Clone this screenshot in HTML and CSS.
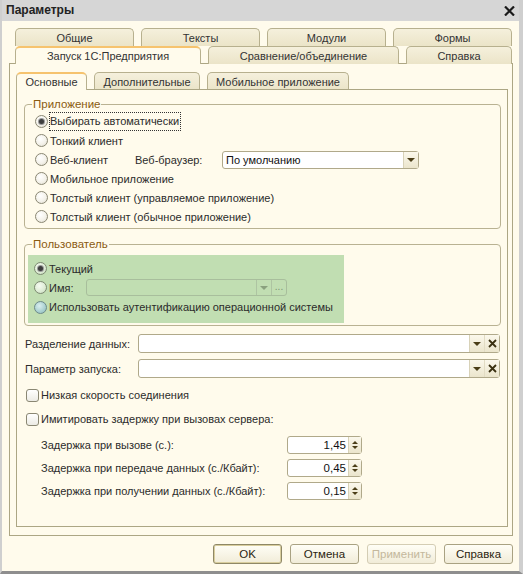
FILE: index.html
```html
<!DOCTYPE html>
<html lang="ru">
<head>
<meta charset="utf-8">
<title>Параметры</title>
<link rel="stylesheet" href="styles.css">
</head>
<body>
<div class="window">
  <div class="titlebar">
    <span class="title">Параметры</span>
    <svg class="close" width="11" height="10" viewBox="0 0 11 10"><path d="M1 0.5 L10 9.5 M10 0.5 L1 9.5" stroke="#1a1a1a" stroke-width="2.2"/></svg>
  </div>
  <div class="client">
    <div class="outer-tabs">
      <div class="tabrow row1">
        <div class="tab">Общие</div>
        <div class="tab">Тексты</div>
        <div class="tab">Модули</div>
        <div class="tab">Формы</div>
      </div>
      <div class="tabrow row2">
        <div class="tab active w-start">Запуск 1С:Предприятия</div>
        <div class="tab w-compare">Сравнение/объединение</div>
        <div class="tab w-help">Справка</div>
      </div>
    </div>
    <div class="outer-panel">
      <div class="tabrow inner-tabs">
        <div class="tab active w-main">Основные</div>
        <div class="tab w-extra">Дополнительные</div>
        <div class="tab w-mobile">Мобильное приложение</div>
      </div>
      <div class="inner-panel">
        <fieldset class="group group-app">
          <legend>Приложение</legend>
          <div class="opt"><span class="radio checked"></span><span class="focus">Выбирать автоматически</span></div>
          <div class="opt"><span class="radio"></span><span>Тонкий клиент</span></div>
          <div class="opt">
            <span class="radio"></span><span class="web">Веб-клиент</span>
            <span class="browser-label">Веб-браузер:</span>
            <span class="combo browser-combo"><span class="combo-text">По умолчанию</span><span class="btn-drop"><i class="tri-down"></i></span></span>
          </div>
          <div class="opt"><span class="radio"></span><span>Мобильное приложение</span></div>
          <div class="opt"><span class="radio"></span><span>Толстый клиент (управляемое приложение)</span></div>
          <div class="opt"><span class="radio"></span><span>Толстый клиент (обычное приложение)</span></div>
        </fieldset>

        <fieldset class="group group-user">
          <legend>Пользователь</legend>
          <div class="green">
            <div class="opt"><span class="radio checked green-radio"></span><span>Текущий</span></div>
            <div class="opt">
              <span class="radio green-radio"></span><span class="name-label">Имя:</span>
              <span class="combo disabled name-combo"><span class="combo-text"></span><span class="btn-drop"><i class="tri-down"></i></span><span class="btn-dots">...</span></span>
            </div>
            <div class="opt"><span class="radio hover-radio"></span><span>Использовать аутентификацию операционной системы</span></div>
          </div>
        </fieldset>

        <div class="fields">
          <div class="field-row r-sep">
            <span class="flabel">Разделение данных:</span>
            <span class="combo wide"><span class="combo-text"></span><span class="btn-drop"><i class="tri-down"></i></span><span class="btn-clear"><svg width="9" height="9" viewBox="0 0 9 9"><path d="M1 1 L8 8 M8 1 L1 8" stroke="#3a3010" stroke-width="1.8"/></svg></span></span>
          </div>
          <div class="field-row r-param">
            <span class="flabel">Параметр запуска:</span>
            <span class="combo wide"><span class="combo-text"></span><span class="btn-drop"><i class="tri-down"></i></span><span class="btn-clear"><svg width="9" height="9" viewBox="0 0 9 9"><path d="M1 1 L8 8 M8 1 L1 8" stroke="#3a3010" stroke-width="1.8"/></svg></span></span>
          </div>
          <div class="check-row c1"><span class="checkbox"></span><span>Низкая скорость соединения</span></div>
          <div class="check-row c2"><span class="checkbox"></span><span>Имитировать задержку при вызовах сервера:</span></div>
          <div class="spin-row s1">
            <span class="slabel">Задержка при вызове (с.):</span>
            <span class="spin"><span class="spin-val">1,45</span><span class="spin-btn"><i class="tri-up"></i><i class="tri-down small"></i></span></span>
          </div>
          <div class="spin-row s2">
            <span class="slabel">Задержка при передаче данных (с./Кбайт):</span>
            <span class="spin"><span class="spin-val">0,45</span><span class="spin-btn"><i class="tri-up"></i><i class="tri-down small"></i></span></span>
          </div>
          <div class="spin-row s3">
            <span class="slabel">Задержка при получении данных (с./Кбайт):</span>
            <span class="spin"><span class="spin-val">0,15</span><span class="spin-btn"><i class="tri-up"></i><i class="tri-down small"></i></span></span>
          </div>
        </div>
      </div>
    </div>
    <div class="buttons">
      <button class="btn default"><span>OK</span></button>
      <button class="btn">Отмена</button>
      <button class="btn disabled">Применить</button>
      <button class="btn">Справка</button>
    </div>
  </div>
</div>
</body>
</html>
```
FILE: styles.css
```css
* { box-sizing: border-box; }
html, body { margin: 0; padding: 0; }
body {
  font-family: "Liberation Sans", Arial, sans-serif;
  font-size: 11px;
  color: #2b2b2b;
  background: #d4d4d4;
}
.window {
  width: 523px;
  height: 574px;
  display: flex;
  flex-direction: column;
  background: #d6d6d6;
  border-bottom: 3px solid #8e8e8e;
  border-left: 2px solid #cfcfcf;
  border-right: 4px solid #cfcfcf;
}
.titlebar {
  height: 21px;
  flex: none;
  display: flex;
  align-items: center;
  justify-content: space-between;
  padding: 0 4px 1px 4px;
}
.title {
  font-weight: bold;
  font-size: 12px;
  color: #222;
}
.close { margin-top: 1px; }
.client {
  flex: 1;
  background: #fffbec;
  display: flex;
  flex-direction: column;
  padding: 7px 6px 0 7px;
}

/* tabs */
.outer-tabs {
  padding: 0 1px 0 6px;
  position: relative;
  z-index: 1;
}
.tabrow { display: flex; gap: 7px; }
.tab {
  height: 18px;
  border: 1px solid #b7b08e;
  border-bottom: none;
  border-radius: 5px 5px 0 0;
  background: linear-gradient(#f5f0dc, #ebe4c8);
  display: flex;
  align-items: center;
  justify-content: center;
  color: #333;
  white-space: nowrap;
}
.row1 .tab { flex: 1; }
.row2 { margin-top: 0; }
.row2 .tab { height: 18px; margin-bottom: -1px; }
.tab.active {
  background: #fffbec;
  border-top: 2px solid #f6c36e;
  position: relative;
  z-index: 2;
}
.w-start { width: 186px; }
.w-compare { width: 191px; }
.w-help { flex: 1; }
.outer-panel {
  flex: none;
  height: 473px;
  border: 1px solid #aca684;
  padding: 8px 4px 0 6px;
  display: flex;
  flex-direction: column;
}
.inner-tabs .tab { height: 18px; margin-bottom: -1px; }
.w-main { width: 71px; }
.w-extra { width: 106px; }
.w-mobile { width: 142px; }
.inner-panel {
  height: 438px;
  border: 1px solid #aca684;
  padding: 7px 6px 0 7px;
}

/* groups */
.group {
  margin: 0;
  border: 1px solid #b9b292;
  border-radius: 4px;
  padding: 1px 0 2px 10px;
}
.group legend {
  color: #8a5a10;
  padding: 0 1px;
  margin-left: -3px;
  line-height: 14px;
  font-size: 11.5px;
}
.group-user { margin-top: 8px; padding: 4px 0 2px 3px; }
.group-user legend { margin-left: 4px; }
.opt {
  height: 19px;
  display: flex;
  align-items: center;
  white-space: nowrap;
}
.radio {
  width: 13px;
  height: 13px;
  border-radius: 50%;
  border: 1px solid #8a8773;
  background: radial-gradient(circle at 40% 35%, #ffffff 0%, #f4f2ea 55%, #dcd8ca 100%);
  margin-right: 2px;
  flex: none;
  display: flex;
  align-items: center;
  justify-content: center;
}
.radio.checked::after {
  content: "";
  width: 5px;
  height: 5px;
  border-radius: 50%;
  background: #3e3e3e;
  box-shadow: 0 0 0 1px #9a9a9a;
}
.focus {
  outline: 1px dotted #333;
  outline-offset: 0;
  padding: 2px 1px 3px 0;
}
.web { width: 85px; }
.browser-label { width: 87px; }
.combo {
  height: 18px;
  border: 1px solid #b0a98a;
  border-radius: 3px;
  background: #fff;
  display: flex;
  align-items: stretch;
}
.combo-text { flex: 1; padding-left: 3px; display: flex; align-items: center; color: #111; }
.btn-drop, .btn-clear, .btn-dots {
  width: 15px;
  background: linear-gradient(#fbf8ec, #ebe5cc);
  border-left: 1px solid #d8d2b8;
  display: flex;
  align-items: center;
  justify-content: center;
}
.tri-down {
  width: 0; height: 0;
  border-left: 4px solid transparent;
  border-right: 4px solid transparent;
  border-top: 4px solid #4b3e18;
}
.tri-up {
  width: 0; height: 0;
  border-left: 3px solid transparent;
  border-right: 3px solid transparent;
  border-bottom: 3px solid #4b3e18;
}
.tri-down.small {
  border-left-width: 3px;
  border-right-width: 3px;
  border-top-width: 3px;
}
.browser-combo { width: 197px; }
.green {
  width: 316px;
  height: 68px;
  background: #c1deb2;
  padding: 4px 0 0 6px;
}
.green .opt:nth-child(3) { height: 20px; }
.green-radio { background: radial-gradient(circle at 40% 35%, #f6fbf2 0%, #dcebd3 60%, #bfd3b5 100%); border-color: #7d8a72; }
.hover-radio { background: radial-gradient(circle at 40% 35%, #d9eeef 0%, #a9d0d0 60%, #8fbcbc 100%); border-color: #6d8a8a; }
.name-label { width: 37px; }
.name-combo {
  width: 201px;
  background: #c1deb2;
  border-color: #a8be9c;
  height: 17px;
}
.name-combo .btn-drop, .name-combo .btn-dots {
  background: transparent;
  border-left: 1px solid #aec4a2;
}
.name-combo .tri-down { border-top-color: #8aa17e; }
.btn-dots { color: #7e9474; align-items: flex-end; padding-bottom: 3px; font-size: 10px; }

/* fields */
.fields {
  display: flex;
  flex-direction: column;
  margin-top: 8px;
}
.field-row { height: 19px; display: flex; align-items: center; padding-left: 1px; }
.r-param { margin-top: 6px; }
.flabel { width: 113px; flex: none; }
.combo.wide { width: 362px; height: 19px; }
.btn-clear { border-left: 1px solid #e2dcc4; }

.check-row { height: 18px; display: flex; align-items: center; padding-left: 2px; white-space: nowrap; }
.c1 { margin-top: 8px; }
.c2 { margin-top: 6px; }
.checkbox {
  width: 13px; height: 13px;
  border: 1px solid #8a8773;
  border-radius: 3px;
  background: linear-gradient(#ffffff, #ecebe4);
  margin-right: 2px;
  flex: none;
}
.spin-row { height: 18px; display: flex; align-items: center; padding-left: 17px; white-space: nowrap; }
.s1 { margin-top: 8px; }
.s2, .s3 { margin-top: 5px; }
.slabel { width: 246px; flex: none; }
.spin {
  width: 75px;
  height: 18px;
  border: 1px solid #b0a98a;
  border-radius: 3px;
  background: #fff;
  display: flex;
}
.spin-val { flex: 1; text-align: right; padding-right: 2px; display: flex; align-items: center; justify-content: flex-end; color: #111; font-size: 11.5px; }
.spin-btn {
  width: 13px;
  background: linear-gradient(#fbf8ec, #ebe5cc);
  border-left: 1px solid #d8d2b8;
  display: flex;
  flex-direction: column;
  align-items: center;
  justify-content: center;
  gap: 2px;
}

/* buttons */
.buttons {
  display: flex;
  justify-content: flex-end;
  gap: 8px;
  margin-top: 8px;
}
.btn {
  width: 69px;
  height: 20px;
  font-family: "Liberation Sans", Arial, sans-serif;
  font-size: 11.5px;
  color: #2b2410;
  border: 1px solid #a9a282;
  border-radius: 3px;
  background: linear-gradient(#fffef6, #f1ecd8);
  padding: 0;
}
.btn.default {
  box-shadow: inset 0 0 0 1px #d9ce9e;
  border-color: #8f8866;
}
.btn.disabled { color: #c4b89c; border-color: #d4cdb4; }
```
